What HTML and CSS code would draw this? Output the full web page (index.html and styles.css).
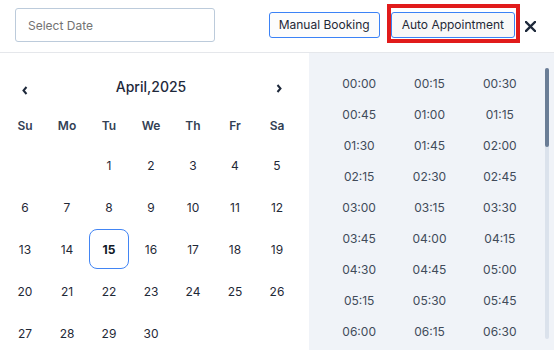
FILE: index.html
```html
<!DOCTYPE html>
<html>
<head>
<meta charset="utf-8">
<link rel="stylesheet" href="styles.css">
</head>
<body>
<div class="modal">
  <header class="topbar">
    <div class="date-input">Select Date</div>
    <div class="actions">
      <button class="btn">Manual Booking</button>
      <button class="btn btn-auto">Auto Appointment</button>
      <button class="close" aria-label="Close">
        <svg width="11" height="11" viewBox="0 0 11 11"><path d="M1 1L10 10M10 1L1 10" stroke="#1e293b" stroke-width="2.4" stroke-linecap="square" fill="none"/></svg>
      </button>
    </div>
  </header>
  <main class="body">
    <section class="calendar">
      <div class="nav">
        <span class="arrow arrow-left"><svg width="6" height="9" viewBox="0 0 6 9"><path d="M4.5 1L1.5 4.5L4.5 8" stroke="#1e293b" stroke-width="2" fill="none"/></svg></span>
        <span class="month">April,2025</span>
        <span class="arrow arrow-right"><svg width="6" height="9" viewBox="0 0 6 9"><path d="M1.5 1L4.5 4.5L1.5 8" stroke="#1e293b" stroke-width="2" fill="none"/></svg></span>
      </div>
      <div class="grid weekdays">
        <span>Su</span><span>Mo</span><span>Tu</span><span>We</span><span>Th</span><span>Fr</span><span>Sa</span>
      </div>
      <div class="grid days">
        <span></span><span></span><span class="d">1</span><span class="d">2</span><span class="d">3</span><span class="d">4</span><span class="d">5</span>
        <span class="d">6</span><span class="d">7</span><span class="d">8</span><span class="d">9</span><span class="d">10</span><span class="d">11</span><span class="d">12</span>
        <span class="d">13</span><span class="d">14</span><span class="d sel">15</span><span class="d">16</span><span class="d">17</span><span class="d">18</span><span class="d">19</span>
        <span class="d">20</span><span class="d">21</span><span class="d">22</span><span class="d">23</span><span class="d">24</span><span class="d">25</span><span class="d">26</span>
        <span class="d">27</span><span class="d">28</span><span class="d">29</span><span class="d">30</span>
      </div>
    </section>
    <section class="times">
      <div class="time-grid">
        <span>00:00</span><span>00:15</span><span>00:30</span>
        <span>00:45</span><span>01:00</span><span>01:15</span>
        <span>01:30</span><span>01:45</span><span>02:00</span>
        <span>02:15</span><span>02:30</span><span>02:45</span>
        <span>03:00</span><span>03:15</span><span>03:30</span>
        <span>03:45</span><span>04:00</span><span>04:15</span>
        <span>04:30</span><span>04:45</span><span>05:00</span>
        <span>05:15</span><span>05:30</span><span>05:45</span>
        <span>06:00</span><span>06:15</span><span>06:30</span>
      </div>
      <div class="scroll-track"><div class="scroll-thumb"></div></div>
    </section>
  </main>
</div>
</body>
</html>
```

FILE: styles.css
```css
* { box-sizing: border-box; }
html, body { margin: 0; padding: 0; background: #fff; }
body {
  font-family: Inter, "Noto Sans", sans-serif;
  color: #1f2937;
  width: 554px;
  height: 350px;
  overflow: hidden;
}
.topbar {
  height: 53px;
  display: flex;
  align-items: center;
  padding: 0 18px 0 15px;
  border-bottom: 1px solid #e5e7eb;
}
.date-input {
  width: 200px;
  height: 34px;
  margin-top: -2px;
  border: 1px solid #bccbdb;
  border-radius: 3px;
  padding: 0 12px;
  display: flex;
  align-items: center;
  font-size: 12px;
  color: #737373;
}
.actions {
  margin-left: auto;
  display: flex;
  align-items: center;
}
.btn {
  font-family: inherit;
  height: 26px;
  padding: 0 9px;
  border: 1px solid #3b82f6;
  border-radius: 3px;
  background: #fcfcfc;
  color: #1f2937;
  font-size: 12px;
  line-height: 1;
  margin-top: -2px;
}
.btn-auto {
  position: relative;
  margin-left: 11px;
  padding: 0 10px;
  background: #f8f8f8;
}
.btn-auto::after {
  content: "";
  position: absolute;
  left: -5px;
  right: -6px;
  top: -9px;
  bottom: -6px;
  border: 4px solid #e11b1b;
}
.close {
  margin-left: 10px;
  padding: 0;
  border: 0;
  background: none;
  display: flex;
  width: 11px;
  height: 11px;
}
.body {
  display: flex;
  height: 297px;
}
.calendar {
  width: 309px;
  padding: 18px 0 0 4px;
}
.nav {
  width: 294px;
  height: 30px;
  display: flex;
  align-items: center;
  justify-content: space-between;
  margin-bottom: 5px;
}
.arrow {
  display: flex;
  width: 42px;
  justify-content: center;
  margin-top: 8px;
}
.arrow-right { margin-top: 5px; padding-left: 4px; }
.month {
  font-size: 14px;
  font-weight: 500;
  color: #1e293b;
}
.grid {
  display: grid;
  grid-template-columns: repeat(7, 42px);
}
.weekdays span {
  height: 38px;
  display: flex;
  align-items: center;
  justify-content: center;
  font-size: 12px;
  font-weight: 600;
  color: #334155;
}
.days span {
  height: 42px;
  display: flex;
  align-items: center;
  justify-content: center;
  font-size: 12px;
  color: #1f2937;
}
.days .sel {
  font-weight: 700;
  color: #111827;
  border: 1px solid #4285f4;
  border-radius: 8px;
  margin: 1px;
  height: 40px;
}
.times {
  position: relative;
  flex: 1;
  background: #f0f3f8;
  padding: 15px 0 0 15px;
}
.time-grid {
  width: 211px;
  display: grid;
  grid-template-columns: repeat(3, 1fr);
  grid-auto-rows: 31px;
}
.time-grid span {
  display: flex;
  align-items: center;
  justify-content: center;
  font-size: 12px;
  color: #414b5a;
}
.scroll-track {
  position: absolute;
  left: 236px;
  top: 15px;
  width: 4px;
  height: 271px;
  border-radius: 2px;
  background: #dbe2ec;
}
.scroll-thumb {
  height: 79px;
  border-radius: 2px;
  background: #6a7d96;
}
```
